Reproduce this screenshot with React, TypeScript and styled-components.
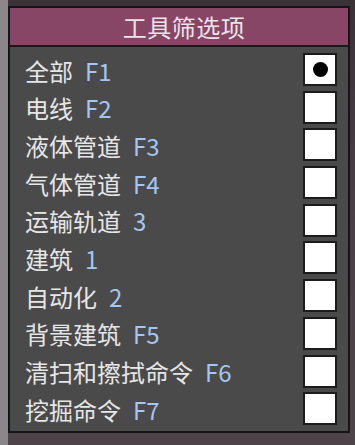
import React, { FC } from "react";
import styled, { createGlobalStyle } from "styled-components";

const GlobalStyle = createGlobalStyle`
  html, body {
    margin: 0;
    padding: 0;
    width: 355px;
    height: 445px;
    overflow: hidden;
  }
  body {
    background:
      linear-gradient(to right, #8c8589 0, #8c8589 8px, transparent 8px),
      linear-gradient(to bottom, #3b3238 0, #4a3f47 50%, #4c4448 100%);
    font-family: "Noto Sans CJK SC", "Noto Sans", sans-serif;
  }
`;

const Panel = styled.div`
  margin: 6px 0 0 8px;
  width: 342px;
  height: 427px;
  box-sizing: border-box;
  border: 2px solid #161416;
  background: #4a4a4a;
  display: flex;
  flex-direction: column;
`;

const Header = styled.div`
  height: 37px;
  padding-left: 10px;
  background: #884666;
  border-bottom: 2px solid #1b1a1b;
  display: flex;
  align-items: center;
  justify-content: center;
  color: #ece4e8;
  font-size: 24px;
  letter-spacing: 0.5px;
`;

const List = styled.div`
  display: flex;
  flex-direction: column;
  gap: 4.7px;
  padding: 6px 11px 0 15px;
`;

const Row = styled.div`
  display: flex;
  align-items: center;
  justify-content: space-between;
  height: 33px;
`;

const Label = styled.span`
  color: #e6e6e6;
  font-size: 24px;
  line-height: 1;
  padding-top: 2px;
`;

const Key = styled.span`
  color: #a3c6f2;
  margin-left: 12px;
`;

const Box = styled.div<{ $checked: boolean }>`
  width: 34px;
  height: 33px;
  box-sizing: border-box;
  border: 2px solid #1c1c1c;
  background: #ffffff;
  display: flex;
  align-items: center;
  justify-content: center;
  &::after {
    content: "";
    display: ${({ $checked }) => ($checked ? "block" : "none")};
    width: 15px;
    height: 15px;
    border-radius: 50%;
    background: #000;
  }
`;

const items = [
  { label: "全部", key: "F1", checked: true },
  { label: "电线", key: "F2" },
  { label: "液体管道", key: "F3" },
  { label: "气体管道", key: "F4" },
  { label: "运输轨道", key: "3" },
  { label: "建筑", key: "1" },
  { label: "自动化", key: "2" },
  { label: "背景建筑", key: "F5" },
  { label: "清扫和擦拭命令", key: "F6" },
  { label: "挖掘命令", key: "F7" },
];

const App: FC = () => {
  return (
    <>
      <GlobalStyle />
      <Panel>
        <Header>工具筛选项</Header>
        <List>
          {items.map((item) => (
            <Row key={item.label}>
              <Label>
                {item.label}
                <Key>{item.key}</Key>
              </Label>
              <Box $checked={!!item.checked} />
            </Row>
          ))}
        </List>
      </Panel>
    </>
  );
};

export default App;
